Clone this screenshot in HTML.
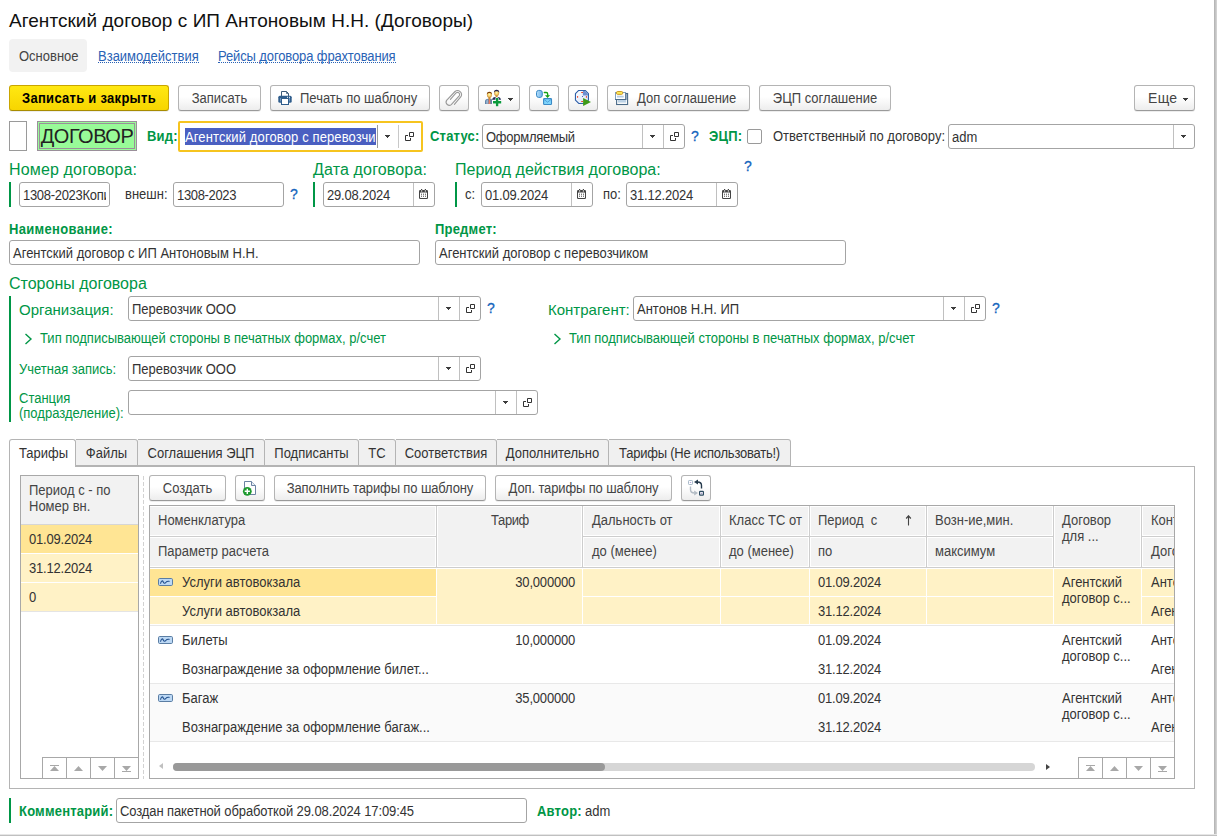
<!DOCTYPE html>
<html lang="ru">
<head>
<meta charset="utf-8">
<title>Агентский договор с ИП Антоновым Н.Н. (Договоры)</title>
<style>
*{box-sizing:border-box;margin:0;padding:0}
html,body{width:1217px;height:836px;overflow:hidden;background:#fff}
body{font-family:"Liberation Sans",sans-serif;font-size:13px;color:#333;position:relative}
.a{position:absolute;white-space:nowrap}
.g{color:#009646}
.gb{color:#009646;font-weight:700;letter-spacing:.2px}
.big{font-size:16px;color:#009646}
.lnk{color:#2962b5}
.q{color:#1565bd;font-size:14px;-webkit-text-stroke:.3px #1565bd;margin-top:-1px}
.btn{position:absolute;height:26px;border:1px solid #b4b4b4;border-bottom-color:#9a9a9a;border-radius:3px;background:linear-gradient(#fff 0%,#fff 45%,#ededed 100%);box-shadow:0 1px 0 rgba(0,0,0,.07);text-align:center;line-height:24px;white-space:nowrap;color:#444}
.inp{position:absolute;height:24px;border:1px solid #a4a4a4;border-radius:3px;background:#fff;line-height:23px;padding-left:3px;white-space:nowrap;overflow:hidden;color:#333}
.sep{position:absolute;top:2px;bottom:2px;width:1px;background:#c8c8c8}
.dd{position:absolute;width:5px;height:3px;background:linear-gradient(#3c3c3c,#3c3c3c) 0 0/5px 1px no-repeat,linear-gradient(#3c3c3c,#3c3c3c) 1px 1px/3px 1px no-repeat,linear-gradient(#3c3c3c,#3c3c3c) 2px 2px/1px 1px no-repeat}
.t{display:inline-block;transform:translateY(.4px) scaleY(1.08);transform-origin:0 50%}
.vbar{position:absolute;width:2px;background:#009646}
</style>
</head>
<body>
<!-- frame edges -->
<div class="a" style="left:1214px;top:0;width:3px;height:836px;background:linear-gradient(90deg,#b0b0b0,#d8d8d8)"></div>
<div class="a" style="left:0;top:834px;width:1217px;height:1px;background:#e6e6e6"></div><div class="a" style="left:0;top:835px;width:1217px;height:1px;background:#c0c0c0"></div>

<!-- title -->
<div class="a" style="left:9px;top:10px;font-size:19px;line-height:22px;color:#111;letter-spacing:.04px">Агентский договор с ИП Антоновым Н.Н. (Договоры)</div>

<!-- nav -->
<div class="a" style="left:9px;top:39px;width:78px;height:33px;background:#f2f2f2;border-radius:4px"></div>
<div class="a" style="left:19px;top:48px;line-height:16px;color:#444"><span class="t">Основное</span></div>
<div class="a lnk" style="left:98px;top:49px;line-height:13px;border-bottom:1px dotted #2962b5"><span class="t">Взаимодействия</span></div>
<div class="a lnk" style="left:218px;top:49px;line-height:13px;border-bottom:1px dotted #2962b5"><span class="t" style="letter-spacing:-.12px">Рейсы договора фрахтования</span></div>

<!-- toolbar -->
<div class="btn" style="left:9px;top:85px;width:160px;background:linear-gradient(#ffe812,#f7d500);border-color:#c9a500 #c9a500 #a88c00;font-weight:700;color:#000;letter-spacing:.28px"><span class="t">Записать и закрыть</span></div>
<div class="btn" style="left:178px;top:85px;width:83px"><span class="t">Записать</span></div>
<div class="btn" style="left:270px;top:85px;width:160px;text-align:left;padding-left:29px"><span class="t">Печать по шаблону</span></div>
<div class="btn" style="left:439px;top:85px;width:30px"></div>
<div class="btn" style="left:478px;top:85px;width:42px"></div>
<div class="btn" style="left:529px;top:85px;width:30px"></div>
<div class="btn" style="left:568px;top:85px;width:30px"></div>
<div class="btn" style="left:607px;top:85px;width:143px;text-align:left;padding-left:29px"><span class="t">Доп соглашение</span></div>
<div class="btn" style="left:759px;top:85px;width:132px"><span class="t">ЭЦП соглашение</span></div>
<div class="btn" style="left:1134px;top:85px;width:61px;text-align:left;padding-left:13px;font-size:14px;letter-spacing:.3px">Еще</div>
<div class="dd" style="left:1183px;top:98px"></div>
<div class="dd" style="left:508px;top:98px"></div>



<!-- toolbar icons -->
<svg class="a" style="left:278px;top:91px" width="14" height="14" viewBox="0 0 14 14"><path d="M3.5 5V0.500h5l2 2V5" fill="#fff" stroke="#3c5a78" stroke-width="1"/><path d="M8.5 0.500v2h2" fill="none" stroke="#3c5a78" stroke-width="0.800"/><rect x="0.300" y="4.700" width="13.400" height="7" rx="1.500" fill="#2f5d8c"/><rect x="2" y="7" width="10" height="3.500" fill="#6f95bd"/><rect x="9" y="5.800" width="1" height="1" fill="#fff"/><rect x="11" y="5.800" width="1" height="1" fill="#fff"/><rect x="3.500" y="7.500" width="7" height="6" fill="#fff" stroke="#2f5d8c" stroke-width="1"/></svg>
<svg class="a" style="left:438px;top:84px" width="32" height="28" viewBox="0 0 32 28"><path d="M16.400 20.300L22.900 12.700A4 4 0 0 0 17 7.500L8.600 16.400A3.200 3.200 0 0 0 13.300 20.600L21.400 11.600A2.200 2.200 0 0 0 18.300 8.700L12.400 15.400" fill="none" stroke="#999" stroke-width="1.100" stroke-linecap="round"/></svg>
<svg class="a" style="left:480px;top:86px" width="28" height="24" viewBox="0 0 28 24"><defs><radialGradient id="fc" cx="50%" cy="45%" r="60%"><stop offset="0" stop-color="#fffbb0"/><stop offset="0.55" stop-color="#f3c765"/><stop offset="1" stop-color="#b9761f"/></radialGradient></defs><path d="M5 18v-2.600c0-1.700 1.300-2.600 3.300-2.600h2c1.300 0 1.700.5 1.700 1.500V18z" fill="#5f83a8"/><path d="M6.200 17.800v-2.300c0-1 .6-1.600 1.700-1.900l.3 4.200z" fill="#a9c3dc" opacity=".8"/><path d="M8.800 13h1.300l.3 5H8.500z" fill="#ee7b5c"/><rect x="8.400" y="10.500" width="2" height="3" fill="#c98a35"/><ellipse cx="9.400" cy="8.800" rx="2.500" ry="2.900" fill="url(#fc)"/><path d="M6.900 8.600c-.2-2 .8-2.900 2.500-2.900s2.800.9 2.500 2.900c-.5-1-1.400-1.500-2.500-1.500s-2 .5-2.500 1.500z" fill="#7a3d08"/><path d="M12 13.800c.3-1.900 1.500-2.900 3.300-2.900h2.600c1.800 0 2.800 1 3.100 2.900z" fill="#232a5c"/><path d="M15.300 10.900h2.600l-1.300 2.200z" fill="#fff"/><rect x="15.600" y="8.800" width="2" height="2.500" fill="#c98a35"/><ellipse cx="16.600" cy="7" rx="2.500" ry="3" fill="url(#fc)"/><path d="M14 6.800c-.2-2.100.9-3 2.600-3s2.900.9 2.600 3c-.5-1.100-1.500-1.500-2.600-1.500s-2.100.4-2.600 1.500z" fill="#2a2550"/><path d="M15.900 12h2.400v3.100h2.900v2.500h-2.900v2.600h-2.400v-2.600H13v-2.500h2.900z" fill="#0a9a3c" stroke="#fff" stroke-width="0.900" paint-order="stroke"/></svg>
<svg class="a" style="left:530px;top:86px" width="28" height="24" viewBox="0 0 28 24"><defs><linearGradient id="cy" x1="0" x2="1"><stop offset="0" stop-color="#b4defb"/><stop offset="1" stop-color="#6db2e8"/></linearGradient></defs><rect x="6.500" y="4.400" width="5.800" height="7" rx="2.200" fill="url(#cy)" stroke="#3a8ac6" stroke-width="1"/><path d="M14.300 6.500h1.900c1 0 1.500.6 1.500 1.600v1.400" fill="none" stroke="#12a012" stroke-width="1.300" stroke-linecap="round"/><path d="M15 9.200h5.100L17.550 12z" fill="#12a012"/><rect x="13.600" y="12.600" width="7.900" height="5.900" rx="0.800" fill="#7fd4fb" stroke="#3a8ac6" stroke-width="1.100"/><path d="M14 13.400l3.550 2.800 3.550-2.800" fill="none" stroke="#4a9ad8" stroke-width="0.900"/></svg>
<svg class="a" style="left:569px;top:86px" width="28" height="24" viewBox="0 0 28 24"><defs><linearGradient id="ck" x1="0" y1="0" x2="1" y2="1"><stop offset="0" stop-color="#ffffff"/><stop offset="1" stop-color="#d4e1f8"/></linearGradient></defs><path d="M9.700 4.450h6.500l3.250 3.250v6.500l-3.250 3.250H9.700L6.450 14.200V7.700z" fill="url(#ck)" stroke="#2f5fa8" stroke-width="1.100" stroke-linejoin="round"/><path d="M13.900 9.600V5h2.100l2.900 2.900v1.700z" fill="#7090d0"/><g fill="#f04a2c"><rect x="12.200" y="6" width="1.800" height="1"/><rect x="8.100" y="10" width="1" height="1.800"/><rect x="16.900" y="10" width="1" height="1.800"/><rect x="12.200" y="15" width="1.800" height="1"/></g><rect x="13" y="10" width="1" height="1" fill="#4a6ab8"/><path d="M14.100 12.100L22 16l-7.900 4z" fill="#3e9a18"/></svg>
<svg class="a" style="left:608px;top:86px" width="28" height="24" viewBox="0 0 28 24"><defs><linearGradient id="dg" x1="0" y1="0" x2="0" y2="1"><stop offset="0" stop-color="#ffffff"/><stop offset="0.500" stop-color="#c4d8ea"/><stop offset="1" stop-color="#ffffff"/></linearGradient></defs><rect x="8.600" y="7.500" width="11" height="11" fill="#fff" stroke="#4a6a88" stroke-width="1.100"/><rect x="9.800" y="14" width="8.400" height="2.600" fill="#bcd2e6"/><rect x="7.500" y="6.500" width="10" height="7" fill="#fff" stroke="#7f9fbe" stroke-width="1"/><path d="M7.200 13.500h10.800V7" fill="none" stroke="#4a6a88" stroke-width="1.100"/><rect x="9" y="9.700" width="6.700" height="1.800" fill="#b4cce2"/><rect x="8.500" y="5.600" width="6.200" height="2.700" rx="1" fill="#fff260" stroke="#c8901a" stroke-width="1"/></svg>
<!-- row 2 -->
<div class="a" style="left:9px;top:121px;width:18px;height:30px;border:1px solid #9a9a9a;background:#fff"></div>
<div class="a" style="left:37px;top:121px;width:100px;height:30px;border:1px solid #9a8f9a;background:#98fb98;box-shadow:inset 0 0 0 1px #98fb98,inset 0 0 0 2px #9a8f9a;font-size:20px;letter-spacing:-.5px;line-height:28px;text-align:center;color:#222">ДОГОВОР</div>
<div class="a gb" style="left:147px;top:128px;line-height:16px"><span class="t">Вид:</span></div>
<div class="a" style="left:178px;top:121px;width:245px;height:31px;border:2px solid #f6c41f;border-radius:2px;background:#fff"></div>
<div class="a" style="left:185px;top:128px;height:17px;width:191px;background:#4a5fc1"></div>
<div class="a" style="left:185px;top:128px;line-height:17px;color:#fff;letter-spacing:.12px"><span class="t">Агентский договор с перевозчи</span></div>
<div class="a" style="left:377px;top:125px;width:1px;height:23px;background:#9a9a9a"></div>
<div class="a" style="left:398px;top:125px;width:1px;height:23px;background:#c8c8c8"></div>
<div class="dd" style="left:385px;top:135px"></div>
<svg class="a" style="left:405px;top:132px" width="9" height="9" viewBox="0 0 9 9"><path d="M4.5 0.5h4v4h-4z M3 3.5H0.5v5h5V6" fill="none" stroke="#333" stroke-width="1"/></svg>

<div class="a gb" style="left:430px;top:128px;line-height:16px"><span class="t">Статус:</span></div>
<div class="inp" style="left:482px;top:124px;width:203px;height:25px"><span class="t" style="letter-spacing:-.25px">Оформляемый</span></div>
<div class="a" style="left:642px;top:125px;width:1px;height:23px;background:#c0c0c0"></div>
<div class="a" style="left:663px;top:125px;width:1px;height:23px;background:#c0c0c0"></div>
<div class="dd" style="left:650px;top:135px"></div>
<svg class="a" style="left:670px;top:132px" width="9" height="9" viewBox="0 0 9 9"><path d="M4.5 0.5h4v4h-4z M3 3.5H0.5v5h5V6" fill="none" stroke="#333" stroke-width="1"/></svg>
<div class="a q" style="left:691px;top:128px;line-height:16px"><span class="t">?</span></div>
<div class="a gb" style="left:709px;top:128px;line-height:16px"><span class="t">ЭЦП:</span></div>
<div class="a" style="left:747px;top:129px;width:15px;height:15px;border:1px solid #9a9a9a;border-radius:2px;background:#fff"></div>
<div class="a" style="left:773px;top:128px;line-height:16px"><span class="t">Ответственный по договору:</span></div>
<div class="inp" style="left:948px;top:124px;width:247px;height:25px"><span class="t">adm</span></div>
<div class="a" style="left:1173px;top:125px;width:1px;height:23px;background:#c0c0c0"></div>
<div class="dd" style="left:1181px;top:135px"></div>

<!-- row 3 -->
<div class="a big" style="left:9px;top:160px;line-height:20px;letter-spacing:.15px">Номер договора:</div>
<div class="a big" style="left:313px;top:160px;line-height:20px;letter-spacing:.15px">Дата договора:</div>
<div class="a big" style="left:455px;top:160px;line-height:20px">Период действия договора:</div>
<div class="a q" style="left:744px;top:158px;line-height:16px"><span class="t">?</span></div>
<div class="vbar" style="left:9px;top:182px;height:25px"></div>
<div class="inp" style="left:19px;top:182px;width:91px;height:25px"><span class="t" style="letter-spacing:-.3px">1308-2023Копи</span></div>
<div class="a" style="left:106px;top:184px;width:3px;height:21px;background:#fff"></div>
<div class="a" style="left:125px;top:186px;line-height:16px"><span class="t">внешн:</span></div>
<div class="inp" style="left:173px;top:182px;width:111px;height:25px"><span class="t" style="letter-spacing:-.35px">1308-2023</span></div>
<div class="a q" style="left:290px;top:186px;line-height:16px"><span class="t">?</span></div>
<div class="vbar" style="left:313px;top:182px;height:25px"></div>
<div class="inp" style="left:323px;top:182px;width:112px;height:25px"><span class="t" style="letter-spacing:-.2px">29.08.2024</span></div>
<div class="a" style="left:413px;top:183px;width:1px;height:23px;background:#c0c0c0"></div>
<div class="vbar" style="left:455px;top:182px;height:25px"></div>
<div class="a" style="left:465px;top:186px;line-height:16px"><span class="t">с:</span></div>
<div class="inp" style="left:481px;top:182px;width:112px;height:25px"><span class="t" style="letter-spacing:-.2px">01.09.2024</span></div>
<div class="a" style="left:571px;top:183px;width:1px;height:23px;background:#c0c0c0"></div>
<div class="a" style="left:603px;top:186px;line-height:16px"><span class="t">по:</span></div>
<div class="inp" style="left:626px;top:182px;width:112px;height:25px"><span class="t" style="letter-spacing:-.2px">31.12.2024</span></div>
<div class="a" style="left:716px;top:183px;width:1px;height:23px;background:#c0c0c0"></div>

<svg class="a" style="left:419px;top:189px" width="9" height="10" viewBox="0 0 9 10"><rect x="2" y="0" width="1.200" height="2" fill="#444"/><rect x="5.800" y="0" width="1.200" height="2" fill="#444"/><rect x="0" y="1" width="9" height="9" rx="1.200" fill="#444"/><rect x="2" y="1.400" width="1.200" height="1.100" fill="#fff"/><rect x="5.800" y="1.400" width="1.200" height="1.100" fill="#fff"/><rect x="1" y="3.600" width="7" height="5.400" rx="0.400" fill="#fff"/><g fill="#444"><rect x="2" y="4.700" width="1" height="1"/><rect x="4" y="4.700" width="1" height="1"/><rect x="6" y="4.700" width="1" height="1"/><rect x="2" y="6.700" width="1" height="1"/><rect x="4" y="6.700" width="1" height="1"/><rect x="6" y="6.700" width="1" height="1"/></g></svg>
<svg class="a" style="left:577px;top:189px" width="9" height="10" viewBox="0 0 9 10"><rect x="2" y="0" width="1.200" height="2" fill="#444"/><rect x="5.800" y="0" width="1.200" height="2" fill="#444"/><rect x="0" y="1" width="9" height="9" rx="1.200" fill="#444"/><rect x="2" y="1.400" width="1.200" height="1.100" fill="#fff"/><rect x="5.800" y="1.400" width="1.200" height="1.100" fill="#fff"/><rect x="1" y="3.600" width="7" height="5.400" rx="0.400" fill="#fff"/><g fill="#444"><rect x="2" y="4.700" width="1" height="1"/><rect x="4" y="4.700" width="1" height="1"/><rect x="6" y="4.700" width="1" height="1"/><rect x="2" y="6.700" width="1" height="1"/><rect x="4" y="6.700" width="1" height="1"/><rect x="6" y="6.700" width="1" height="1"/></g></svg>
<svg class="a" style="left:722px;top:189px" width="9" height="10" viewBox="0 0 9 10"><rect x="2" y="0" width="1.200" height="2" fill="#444"/><rect x="5.800" y="0" width="1.200" height="2" fill="#444"/><rect x="0" y="1" width="9" height="9" rx="1.200" fill="#444"/><rect x="2" y="1.400" width="1.200" height="1.100" fill="#fff"/><rect x="5.800" y="1.400" width="1.200" height="1.100" fill="#fff"/><rect x="1" y="3.600" width="7" height="5.400" rx="0.400" fill="#fff"/><g fill="#444"><rect x="2" y="4.700" width="1" height="1"/><rect x="4" y="4.700" width="1" height="1"/><rect x="6" y="4.700" width="1" height="1"/><rect x="2" y="6.700" width="1" height="1"/><rect x="4" y="6.700" width="1" height="1"/><rect x="6" y="6.700" width="1" height="1"/></g></svg>
<!-- row 4 -->
<div class="a gb" style="left:9px;top:221px;line-height:16px;letter-spacing:.32px"><span class="t">Наименование:</span></div>
<div class="inp" style="left:9px;top:240px;width:411px;height:25px"><span class="t">Агентский договор с ИП Антоновым Н.Н.</span></div>
<div class="a gb" style="left:435px;top:221px;line-height:16px"><span class="t">Предмет:</span></div>
<div class="inp" style="left:435px;top:240px;width:411px;height:25px"><span class="t">Агентский договор с перевозчиком</span></div>

<!-- parties -->
<div class="a big" style="left:9px;top:274px;line-height:20px">Стороны договора</div>
<div class="vbar" style="left:9px;top:296px;height:126px"></div>
<div class="a g" style="left:19px;top:300px;font-size:15px;line-height:20px">Организация:</div>
<div class="inp" style="left:128px;top:296px;width:353px;height:25px"><span class="t">Перевозчик ООО</span></div>
<div class="a" style="left:438px;top:297px;width:1px;height:23px;background:#c0c0c0"></div>
<div class="a" style="left:459px;top:297px;width:1px;height:23px;background:#c0c0c0"></div>
<div class="dd" style="left:446px;top:307px"></div>
<svg class="a" style="left:466px;top:304px" width="9" height="9" viewBox="0 0 9 9"><path d="M4.5 0.5h4v4h-4z M3 3.5H0.5v5h5V6" fill="none" stroke="#333" stroke-width="1"/></svg>
<div class="a q" style="left:487px;top:300px;line-height:16px"><span class="t">?</span></div>

<div class="a g" style="left:548px;top:300px;font-size:15px;line-height:20px">Контрагент:</div>
<div class="inp" style="left:633px;top:296px;width:353px;height:25px"><span class="t">Антонов Н.Н. ИП</span></div>
<div class="a" style="left:943px;top:297px;width:1px;height:23px;background:#c0c0c0"></div>
<div class="a" style="left:964px;top:297px;width:1px;height:23px;background:#c0c0c0"></div>
<div class="dd" style="left:951px;top:307px"></div>
<svg class="a" style="left:971px;top:304px" width="9" height="9" viewBox="0 0 9 9"><path d="M4.5 0.5h4v4h-4z M3 3.5H0.5v5h5V6" fill="none" stroke="#333" stroke-width="1"/></svg>
<div class="a q" style="left:992px;top:300px;line-height:16px"><span class="t">?</span></div>

<svg class="a" style="left:24px;top:333px" width="9" height="12" viewBox="0 0 9 12"><path d="M1.5 1l5.5 5-5.5 5" fill="none" stroke="#009646" stroke-width="1.4"/></svg>
<div class="a g" style="left:40px;top:330px;line-height:16px"><span class="t">Тип подписывающей стороны в печатных формах, р/счет</span></div>
<svg class="a" style="left:553px;top:333px" width="9" height="12" viewBox="0 0 9 12"><path d="M1.5 1l5.5 5-5.5 5" fill="none" stroke="#009646" stroke-width="1.4"/></svg>
<div class="a g" style="left:569px;top:330px;line-height:16px"><span class="t">Тип подписывающей стороны в печатных формах, р/счет</span></div>

<div class="a g" style="left:19px;top:361px;line-height:16px"><span class="t">Учетная запись:</span></div>
<div class="inp" style="left:128px;top:356px;width:353px;height:25px"><span class="t">Перевозчик ООО</span></div>
<div class="a" style="left:438px;top:357px;width:1px;height:23px;background:#c0c0c0"></div>
<div class="a" style="left:459px;top:357px;width:1px;height:23px;background:#c0c0c0"></div>
<div class="dd" style="left:446px;top:367px"></div>
<svg class="a" style="left:466px;top:364px" width="9" height="9" viewBox="0 0 9 9"><path d="M4.5 0.5h4v4h-4z M3 3.5H0.5v5h5V6" fill="none" stroke="#333" stroke-width="1"/></svg>

<div class="a g" style="left:19px;top:390px;line-height:15px;white-space:normal;width:110px"><span class="t">Станция</span><br><span class="t">(подразделение):</span></div>
<div class="inp" style="left:128px;top:390px;width:410px;height:25px"></div>
<div class="a" style="left:495px;top:391px;width:1px;height:23px;background:#c0c0c0"></div>
<div class="a" style="left:516px;top:391px;width:1px;height:23px;background:#c0c0c0"></div>
<div class="dd" style="left:503px;top:401px"></div>
<svg class="a" style="left:523px;top:398px" width="9" height="9" viewBox="0 0 9 9"><path d="M4.5 0.5h4v4h-4z M3 3.5H0.5v5h5V6" fill="none" stroke="#333" stroke-width="1"/></svg>


<!-- tabs -->
<style>
.tab{position:absolute;top:439px;height:27px;border:1px solid #b4b4b4;border-left:none;background:#f0f0f0;text-align:center;line-height:26px;color:#333;border-radius:0 3px 0 0}
.tab.act{background:#fff;border-left:1px solid #b4b4b4;border-bottom:none;height:28px;border-radius:3px 3px 0 0}
.hc{position:absolute;background:#f2f2f2;line-height:16px;color:#444;white-space:nowrap;overflow:hidden}
.cell{position:absolute;line-height:16px;white-space:nowrap;color:#333}
</style>
<div class="a" style="left:9px;top:466px;width:1186px;height:323px;border:1px solid #b4b4b4;background:#fff"></div>
<div class="tab act" style="left:9px;width:67px;padding-left:2px"><span class="t">Тарифы</span></div>
<div class="tab" style="left:76px;width:62px"><span class="t">Файлы</span></div>
<div class="tab" style="left:138px;width:127px"><span class="t">Соглашения ЭЦП</span></div>
<div class="tab" style="left:265px;width:94px"><span class="t">Подписанты</span></div>
<div class="tab" style="left:359px;width:37px"><span class="t">ТС</span></div>
<div class="tab" style="left:396px;width:101px"><span class="t">Соответствия</span></div>
<div class="tab" style="left:497px;width:112px"><span class="t">Дополнительно</span></div>
<div class="tab" style="left:609px;width:182px"><span class="t" style="letter-spacing:-.24px">Тарифы (Не использовать!)</span></div>

<!-- left list -->
<div class="a" style="left:20px;top:475px;width:119px;height:304px;border:1px solid #a8a8a8;background:#fff"></div>
<div class="a" style="left:21px;top:476px;width:117px;height:48px;background:#f2f2f2"></div>
<div class="a" style="left:21px;top:524px;width:117px;height:1px;background:#d6d6d6"></div>
<div class="cell" style="left:29px;top:482px;color:#444"><span class="t">Период с - по</span></div>
<div class="cell" style="left:29px;top:498px;color:#444"><span class="t">Номер вн.</span></div>
<div class="a" style="left:21px;top:525px;width:117px;height:28px;background:#ffe594"></div>
<div class="a" style="left:21px;top:554px;width:117px;height:28px;background:#fff2c6"></div>
<div class="a" style="left:21px;top:583px;width:117px;height:28px;background:#fff2c6"></div>
<div class="a" style="left:21px;top:611px;width:117px;height:1px;background:#e4e4e4"></div>
<div class="cell" style="left:29px;top:531px"><span class="t" style="letter-spacing:-.2px">01.09.2024</span></div>
<div class="cell" style="left:29px;top:560px"><span class="t" style="letter-spacing:-.2px">31.12.2024</span></div>
<div class="cell" style="left:29px;top:589px"><span class="t">0</span></div>
<div class="a" style="left:42px;top:757px;width:97px;height:22px;border:1px solid #a8a8a8;background:#fff"></div>
<div class="a" style="left:66px;top:757px;width:1px;height:22px;background:#a8a8a8"></div>
<div class="a" style="left:90px;top:757px;width:1px;height:22px;background:#a8a8a8"></div>
<div class="a" style="left:114px;top:757px;width:1px;height:22px;background:#a8a8a8"></div>
<svg class="a" style="left:42px;top:757px" width="97" height="22" viewBox="0 0 97 22"><path d="M8 8h9v1h-9z M12.500 9l4.500 5h-9z" fill="#a8a8a8"/><path d="M36.500 9l4.500 5h-9z" fill="#a8a8a8"/><path d="M60.500 14l4.500-5h-9z" fill="#a8a8a8"/><path d="M80 14h9v1h-9z M84.500 14l4.500-5h-9z" fill="#a8a8a8"/></svg>
<div class="a" style="left:143px;top:476px;width:1px;height:303px;background:repeating-linear-gradient(180deg,#d2d2d2 0,#d2d2d2 4px,transparent 4px,transparent 6px)"></div>

<!-- cmd bar -->
<div class="btn" style="left:149px;top:475px;width:77px"><span class="t">Создать</span></div>
<div class="btn" style="left:235px;top:475px;width:30px"></div>
<div class="btn" style="left:274px;top:475px;width:212px"><span class="t" style="letter-spacing:-.12px">Заполнить тарифы по шаблону</span></div>
<div class="btn" style="left:495px;top:475px;width:177px"><span class="t" style="letter-spacing:-.13px">Доп. тарифы по шаблону</span></div>
<div class="btn" style="left:681px;top:475px;width:30px"></div>
<!-- cmd bar icons -->
<svg class="a" style="left:242px;top:480px" width="15" height="16" viewBox="0 0 15 16"><path d="M2.500 1.500h7l4 4v9h-11z" fill="#fff" stroke="#6b83a3" stroke-width="1"/><path d="M9.500 1.500v4h4" fill="#e8eef5" stroke="#6b83a3" stroke-width="1"/><circle cx="5.300" cy="11.300" r="4.400" fill="#1d9a2e"/><path d="M5.300 8.700v5.200M2.700 11.300h5.200" stroke="#fff" stroke-width="1.400"/></svg>
<svg class="a" style="left:687px;top:479px" width="18" height="18" viewBox="0 0 18 18"><rect x="1.500" y="1.500" width="4" height="4" rx="0.700" fill="#fff" stroke="#a8b9c9" stroke-width="1"/><rect x="2.800" y="3" width="1.400" height="1" fill="#b8a8d8"/><path d="M14.500 9.500V6.500c0-2.300-1.300-3.500-4-3.500" fill="none" stroke="#24394b" stroke-width="1.400"/><path d="M7 3l4-2.600v5.200z" fill="#24394b"/><path d="M3.500 7.500v3c0 2.200 1.200 3.500 4 3.500" fill="none" stroke="#b3bcc5" stroke-width="1.400"/><path d="M11 14l-3.800-2.600v5.200z" fill="#b3bcc5"/><rect x="12.600" y="12.300" width="3.800" height="3.800" rx="0.700" fill="#fff" stroke="#2c4a60" stroke-width="1.200"/><rect x="13.900" y="13.800" width="1.300" height="0.900" fill="#8a78c0"/></svg>

<!-- table -->
<div class="a" style="left:149px;top:505px;width:1026px;height:274px;border:1px solid #a8a8a8;background:#fff;overflow:hidden"></div>
<div class="a" id="tbl" style="left:150px;top:506px;width:1024px;height:272px;overflow:hidden">
<div class="a" style="left:0;top:0;width:1024px;height:61px;background:#f2f2f2"></div><div class="a" style="left:0;top:0;width:1024px;height:1px;background:#fff"></div>
<div class="a" style="left:0;top:60px;width:1024px;height:1px;background:#fff"></div>
<div class="a" style="left:285px;top:0;width:1px;height:61px;background:#fff"></div><div class="a" style="left:286px;top:0;width:1px;height:61px;background:#cdcdcd"></div><div class="a" style="left:287px;top:0;width:1px;height:61px;background:#fff"></div>
<div class="a" style="left:431px;top:0;width:1px;height:61px;background:#fff"></div><div class="a" style="left:432px;top:0;width:1px;height:61px;background:#cdcdcd"></div><div class="a" style="left:433px;top:0;width:1px;height:61px;background:#fff"></div>
<div class="a" style="left:569px;top:0;width:1px;height:61px;background:#fff"></div><div class="a" style="left:570px;top:0;width:1px;height:61px;background:#cdcdcd"></div><div class="a" style="left:571px;top:0;width:1px;height:61px;background:#fff"></div>
<div class="a" style="left:658px;top:0;width:1px;height:61px;background:#fff"></div><div class="a" style="left:659px;top:0;width:1px;height:61px;background:#cdcdcd"></div><div class="a" style="left:660px;top:0;width:1px;height:61px;background:#fff"></div>
<div class="a" style="left:775px;top:0;width:1px;height:61px;background:#fff"></div><div class="a" style="left:776px;top:0;width:1px;height:61px;background:#cdcdcd"></div><div class="a" style="left:777px;top:0;width:1px;height:61px;background:#fff"></div>
<div class="a" style="left:902px;top:0;width:1px;height:61px;background:#fff"></div><div class="a" style="left:903px;top:0;width:1px;height:61px;background:#cdcdcd"></div><div class="a" style="left:904px;top:0;width:1px;height:61px;background:#fff"></div>
<div class="a" style="left:990px;top:0;width:1px;height:61px;background:#fff"></div><div class="a" style="left:991px;top:0;width:1px;height:61px;background:#cdcdcd"></div><div class="a" style="left:992px;top:0;width:1px;height:61px;background:#fff"></div>
<div class="a" style="left:0px;top:29px;width:286px;height:1px;background:#fff"></div><div class="a" style="left:0px;top:30px;width:286px;height:1px;background:#cdcdcd"></div><div class="a" style="left:0px;top:31px;width:286px;height:1px;background:#fff"></div>
<div class="a" style="left:433px;top:29px;width:137px;height:1px;background:#fff"></div><div class="a" style="left:433px;top:30px;width:137px;height:1px;background:#cdcdcd"></div><div class="a" style="left:433px;top:31px;width:137px;height:1px;background:#fff"></div>
<div class="a" style="left:571px;top:29px;width:88px;height:1px;background:#fff"></div><div class="a" style="left:571px;top:30px;width:88px;height:1px;background:#cdcdcd"></div><div class="a" style="left:571px;top:31px;width:88px;height:1px;background:#fff"></div>
<div class="a" style="left:660px;top:29px;width:116px;height:1px;background:#fff"></div><div class="a" style="left:660px;top:30px;width:116px;height:1px;background:#cdcdcd"></div><div class="a" style="left:660px;top:31px;width:116px;height:1px;background:#fff"></div>
<div class="a" style="left:777px;top:29px;width:126px;height:1px;background:#fff"></div><div class="a" style="left:777px;top:30px;width:126px;height:1px;background:#cdcdcd"></div><div class="a" style="left:777px;top:31px;width:126px;height:1px;background:#fff"></div>
<div class="a" style="left:992px;top:29px;width:157px;height:1px;background:#fff"></div><div class="a" style="left:992px;top:30px;width:157px;height:1px;background:#cdcdcd"></div><div class="a" style="left:992px;top:31px;width:157px;height:1px;background:#fff"></div>
<div class="a" style="left:0;top:61px;width:1024px;height:1px;background:#cdcdcd"></div>
<div class="cell" style="left:8px;top:6px;color:#444"><span class="t">Номенклатура</span></div>
<div class="cell" style="left:8px;top:37px;color:#444"><span class="t">Параметр расчета</span></div>
<div class="cell" style="left:287px;top:6px;width:146px;text-align:center;color:#444"><span class="t" style="letter-spacing:-.4px">Тариф</span></div>
<div class="cell" style="left:442px;top:6px;color:#444"><span class="t">Дальность от</span></div>
<div class="cell" style="left:442px;top:37px;color:#444"><span class="t">до (менее)</span></div>
<div class="cell" style="left:579px;top:6px;color:#444"><span class="t">Класс ТС от</span></div>
<div class="cell" style="left:579px;top:37px;color:#444"><span class="t">до (менее)</span></div>
<div class="cell" style="left:668px;top:6px;color:#444"><span class="t">Период &nbsp;с</span></div>
<svg class="a" style="left:755px;top:9px" width="7" height="12" viewBox="0 0 7 12"><path d="M3.500 1V10.500" fill="none" stroke="#444" stroke-width="1.100"/><path d="M1.200 3.500L3.500 0.900 5.800 3.500" fill="none" stroke="#444" stroke-width="1.300"/></svg>
<div class="cell" style="left:668px;top:37px;color:#444"><span class="t">по</span></div>
<div class="cell" style="left:785px;top:6px;color:#444"><span class="t">Возн-ие,мин.</span></div>
<div class="cell" style="left:785px;top:37px;color:#444"><span class="t">максимум</span></div>
<div class="cell" style="left:912px;top:6px;color:#444"><span class="t">Договор</span></div>
<div class="cell" style="left:912px;top:22px;color:#444"><span class="t">для ...</span></div>
<div class="cell" style="left:1001px;top:6px;color:#444"><span class="t">Контрагент</span></div>
<div class="cell" style="left:1001px;top:37px;color:#444"><span class="t">Договор</span></div>
<div class="a" style="left:0;top:62px;width:1024px;height:56px;background:#fff2c6"></div>
<div class="a" style="left:0;top:62px;width:286px;height:28px;background:#ffe594"></div>
<div class="a" style="left:0;top:62px;width:1024px;height:1px;background:#fff"></div>
<div class="a" style="left:286px;top:62px;width:1px;height:56px;background:#fff"></div>
<div class="a" style="left:432px;top:62px;width:1px;height:56px;background:#fff"></div>
<div class="a" style="left:570px;top:62px;width:1px;height:56px;background:#fff"></div>
<div class="a" style="left:659px;top:62px;width:1px;height:56px;background:#fff"></div>
<div class="a" style="left:776px;top:62px;width:1px;height:56px;background:#fff"></div>
<div class="a" style="left:903px;top:62px;width:1px;height:56px;background:#fff"></div>
<div class="a" style="left:991px;top:62px;width:1px;height:56px;background:#fff"></div>
<div class="a" style="left:0px;top:90px;width:286px;height:1px;background:#fff"></div>
<div class="a" style="left:433px;top:90px;width:137px;height:1px;background:#fff"></div>
<div class="a" style="left:571px;top:90px;width:88px;height:1px;background:#fff"></div>
<div class="a" style="left:660px;top:90px;width:116px;height:1px;background:#fff"></div>
<div class="a" style="left:777px;top:90px;width:126px;height:1px;background:#fff"></div>
<div class="a" style="left:992px;top:90px;width:157px;height:1px;background:#fff"></div>
<div class="a" style="left:0;top:119px;width:1024px;height:1px;background:#e8e8e8"></div>
<div class="a" style="left:0;top:178px;width:1024px;height:57px;background:#fafafa"></div>
<div class="a" style="left:0;top:177px;width:1024px;height:1px;background:#e8e8e8"></div>
<div class="a" style="left:0;top:235px;width:1024px;height:1px;background:#e8e8e8"></div>
<svg class="a" style="left:8px;top:72px" width="15" height="8" viewBox="0 0 15 8"><rect x="0.500" y="0.500" width="14" height="7" rx="1.200" fill="#bcd8f4" stroke="#5a7da3"/><path d="M2.600 5.300c.7-2.800 1.900-3 2.700-1.300s1.800 1.500 2.700.2 1.700-1 3.200-1" fill="none" stroke="#1f4e8c" stroke-width="1.100" stroke-linecap="round"/></svg>
<div class="cell" style="left:32px;top:68px"><span class="t">Услуги автовокзала</span></div>
<div class="cell" style="left:32px;top:97px"><span class="t">Услуги автовокзала</span></div>
<div class="cell" style="left:287px;top:68px;width:138px;text-align:right"><span class="t" style="letter-spacing:-.2px">30,000000</span></div>
<div class="cell" style="left:668px;top:68px"><span class="t" style="letter-spacing:-.2px">01.09.2024</span></div>
<div class="cell" style="left:668px;top:97px"><span class="t" style="letter-spacing:-.2px">31.12.2024</span></div>
<div class="cell" style="left:912px;top:68px"><span class="t">Агентский</span></div>
<div class="cell" style="left:912px;top:84px"><span class="t">договор с...</span></div>
<div class="cell" style="left:1001px;top:68px"><span class="t">Антонов Н.Н. ИП</span></div>
<div class="cell" style="left:1001px;top:97px"><span class="t">Агентский договор</span></div>
<svg class="a" style="left:8px;top:130px" width="15" height="8" viewBox="0 0 15 8"><rect x="0.500" y="0.500" width="14" height="7" rx="1.200" fill="#bcd8f4" stroke="#5a7da3"/><path d="M2.600 5.300c.7-2.800 1.900-3 2.700-1.300s1.800 1.500 2.700.2 1.700-1 3.200-1" fill="none" stroke="#1f4e8c" stroke-width="1.100" stroke-linecap="round"/></svg>
<div class="cell" style="left:32px;top:126px"><span class="t">Билеты</span></div>
<div class="cell" style="left:32px;top:155px"><span class="t">Вознаграждение за оформление билет...</span></div>
<div class="cell" style="left:287px;top:126px;width:138px;text-align:right"><span class="t" style="letter-spacing:-.2px">10,000000</span></div>
<div class="cell" style="left:668px;top:126px"><span class="t" style="letter-spacing:-.2px">01.09.2024</span></div>
<div class="cell" style="left:668px;top:155px"><span class="t" style="letter-spacing:-.2px">31.12.2024</span></div>
<div class="cell" style="left:912px;top:126px"><span class="t">Агентский</span></div>
<div class="cell" style="left:912px;top:142px"><span class="t">договор с...</span></div>
<div class="cell" style="left:1001px;top:126px"><span class="t">Антонов Н.Н. ИП</span></div>
<div class="cell" style="left:1001px;top:155px"><span class="t">Агентский договор</span></div>
<svg class="a" style="left:8px;top:188px" width="15" height="8" viewBox="0 0 15 8"><rect x="0.500" y="0.500" width="14" height="7" rx="1.200" fill="#bcd8f4" stroke="#5a7da3"/><path d="M2.600 5.300c.7-2.800 1.900-3 2.700-1.300s1.800 1.500 2.700.2 1.700-1 3.200-1" fill="none" stroke="#1f4e8c" stroke-width="1.100" stroke-linecap="round"/></svg>
<div class="cell" style="left:32px;top:184px"><span class="t">Багаж</span></div>
<div class="cell" style="left:32px;top:213px"><span class="t">Вознаграждение за оформление багаж...</span></div>
<div class="cell" style="left:287px;top:184px;width:138px;text-align:right"><span class="t" style="letter-spacing:-.2px">35,000000</span></div>
<div class="cell" style="left:668px;top:184px"><span class="t" style="letter-spacing:-.2px">01.09.2024</span></div>
<div class="cell" style="left:668px;top:213px"><span class="t" style="letter-spacing:-.2px">31.12.2024</span></div>
<div class="cell" style="left:912px;top:184px"><span class="t">Агентский</span></div>
<div class="cell" style="left:912px;top:200px"><span class="t">договор с...</span></div>
<div class="cell" style="left:1001px;top:184px"><span class="t">Антонов Н.Н. ИП</span></div>
<div class="cell" style="left:1001px;top:213px"><span class="t">Агентский договор</span></div>
<div class="a" style="left:23px;top:257px;width:862px;height:8px;border-radius:4px;background:#d6d6d6"></div>
<div class="a" style="left:23px;top:257px;width:432px;height:8px;border-radius:4px;background:#999"></div>
<div class="a" style="left:9px;top:257px;width:0;height:0;border-top:3.5px solid transparent;border-bottom:3.5px solid transparent;border-right:4.5px solid #c0c0c0"></div>
<div class="a" style="left:896px;top:258px;width:0;height:0;border-top:3px solid transparent;border-bottom:3px solid transparent;border-left:4px solid #444"></div>
</div>
<div class="a" style="left:1078px;top:757px;width:97px;height:22px;border:1px solid #a8a8a8;background:#fff"></div>
<div class="a" style="left:1102px;top:757px;width:1px;height:22px;background:#a8a8a8"></div>
<div class="a" style="left:1126px;top:757px;width:1px;height:22px;background:#a8a8a8"></div>
<div class="a" style="left:1150px;top:757px;width:1px;height:22px;background:#a8a8a8"></div>
<svg class="a" style="left:1078px;top:757px" width="97" height="22" viewBox="0 0 97 22"><path d="M8 8h9v1h-9z M12.500 9l4.500 5h-9z" fill="#a8a8a8"/><path d="M36.500 9l4.500 5h-9z" fill="#a8a8a8"/><path d="M60.500 14l4.500-5h-9z" fill="#a8a8a8"/><path d="M80 14h9v1h-9z M84.500 14l4.500-5h-9z" fill="#a8a8a8"/></svg>

<!-- bottom -->
<div class="vbar" style="left:9px;top:798px;height:25px"></div>
<div class="a gb" style="left:19px;top:803px;line-height:16px"><span class="t">Комментарий:</span></div>
<div class="inp" style="left:116px;top:798px;width:411px;height:25px"><span class="t" style="letter-spacing:-.1px">Создан пакетной обработкой 29.08.2024 17:09:45</span></div>
<div class="a gb" style="left:537px;top:803px;line-height:16px"><span class="t">Автор:</span></div>
<div class="a" style="left:585px;top:803px;line-height:16px"><span class="t">adm</span></div>
</body>
</html>
